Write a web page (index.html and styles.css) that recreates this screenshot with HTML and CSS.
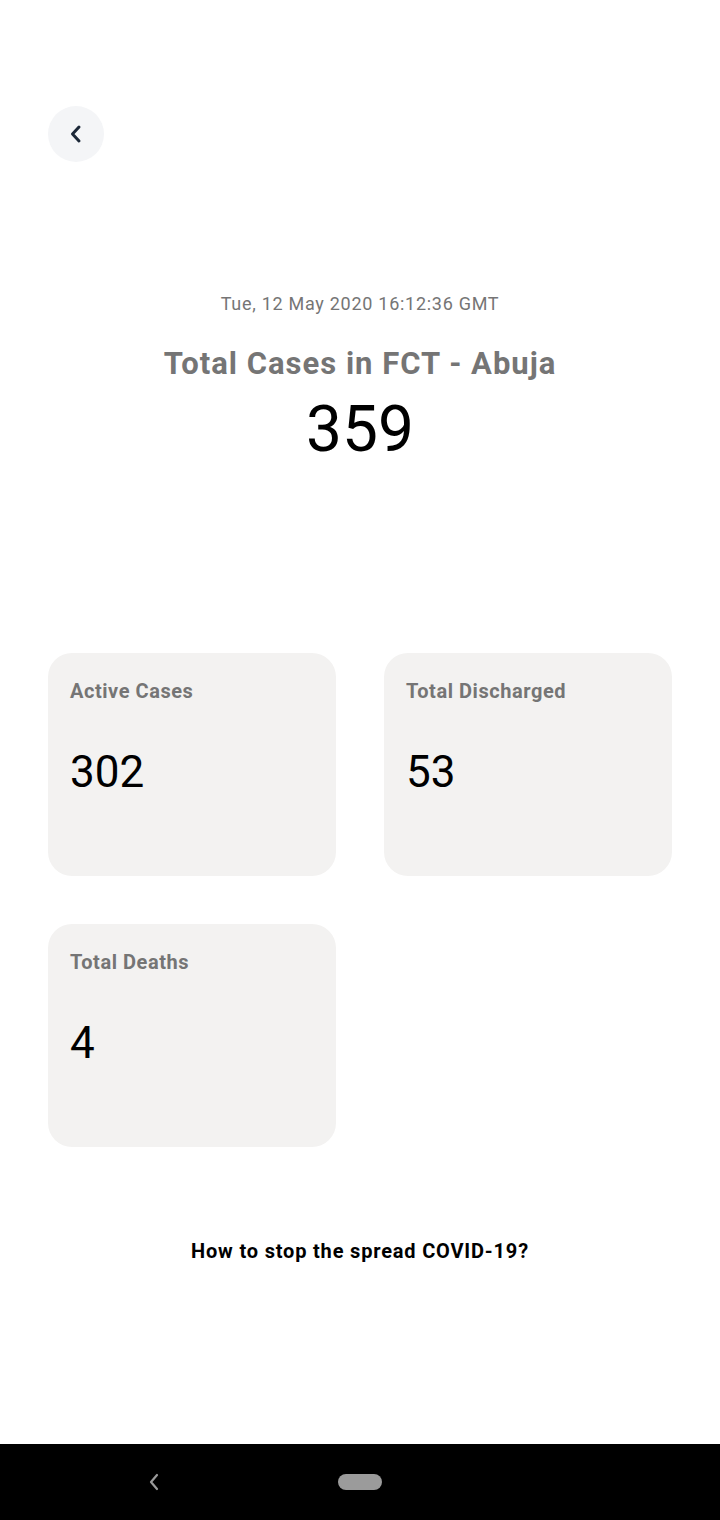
FILE: index.html
```html
<!DOCTYPE html>
<html>
<head>
<meta charset="utf-8">
<link rel="stylesheet" href="styles.css">
</head>
<body>
<div class="screen">
  <main class="content">
    <div class="topbar">
      <button class="back-btn" aria-label="Back">
        <svg width="20" height="20" viewBox="0 0 20 20"><path d="M13 3 L6.5 10 L13 17" fill="none" stroke="#1c2838" stroke-width="3" stroke-linecap="round" stroke-linejoin="round"/></svg>
      </button>
    </div>
    <section class="summary">
      <div class="date">Tue, 12 May 2020 16:12:36 GMT</div>
      <h1 class="title">Total Cases in FCT - Abuja</h1>
      <div class="total">359</div>
    </section>
    <section class="cards">
      <div class="card">
        <div class="card-label">Active Cases</div>
        <div class="card-value">302</div>
      </div>
      <div class="card">
        <div class="card-label">Total Discharged</div>
        <div class="card-value">53</div>
      </div>
      <div class="card">
        <div class="card-label">Total Deaths</div>
        <div class="card-value">4</div>
      </div>
    </section>
    <div class="link">How to stop the spread COVID-19?</div>
  </main>
  <nav class="navbar">
    <svg class="nav-back" width="14" height="20" viewBox="0 0 14 20"><path d="M10 3 L4 10 L10 17" fill="none" stroke="#9a9a9a" stroke-width="2.2" stroke-linecap="round" stroke-linejoin="round"/></svg>
    <div class="nav-home"></div>
  </nav>
</div>
</body>
</html>
```
FILE: styles.css
```css
* { box-sizing: border-box; }
html, body { margin: 0; padding: 0; background: #ffffff; }
body { font-family: Roboto, "Noto Sans", sans-serif; }
.screen {
  width: 720px;
  height: 1520px;
  display: flex;
  flex-direction: column;
}
.content {
  flex: 1;
  display: flex;
  flex-direction: column;
  padding: 106px 48px 0;
}
.topbar { display: flex; }
.back-btn {
  width: 56px;
  height: 56px;
  border-radius: 50%;
  border: none;
  background: #f4f5f7;
  display: flex;
  align-items: center;
  justify-content: center;
  padding: 0;
}
.summary {
  display: flex;
  flex-direction: column;
  align-items: center;
  margin-top: 130px;
}
.date {
  font-size: 18px;
  color: #757575;
  line-height: 24px;
  letter-spacing: 0.72px;
}
.title {
  margin: 29px 0 0;
  font-size: 31px;
  font-weight: 700;
  color: #757575;
  line-height: 38px;
  letter-spacing: 1px;
}
.total {
  margin-top: 10px;
  font-size: 64px;
  line-height: 74px;
  color: #000;
}
.cards {
  display: grid;
  grid-template-columns: 288px 288px;
  column-gap: 48px;
  row-gap: 48px;
  margin-top: 186px;
}
.card {
  height: 223px;
  background: #f3f2f1;
  border-radius: 24px;
  padding: 26px 22px;
}
.card-label {
  font-size: 20px;
  font-weight: 700;
  color: #757575;
  line-height: 24px;
  letter-spacing: 0.55px;
}
.card-value {
  margin-top: 43px;
  font-size: 44px;
  line-height: 52px;
  color: #000;
}
.link {
  margin-top: 92px;
  text-align: center;
  font-size: 20px;
  font-weight: 700;
  color: #000;
  line-height: 24px;
  letter-spacing: 0.82px;
}
.navbar {
  height: 76px;
  background: #000;
  position: relative;
  display: flex;
  align-items: center;
  justify-content: center;
}
.nav-back {
  position: absolute;
  left: 147px;
  top: 28px;
}
.nav-home {
  width: 44px;
  height: 16px;
  border-radius: 8px;
  background: #9b9b9b;
}
```
